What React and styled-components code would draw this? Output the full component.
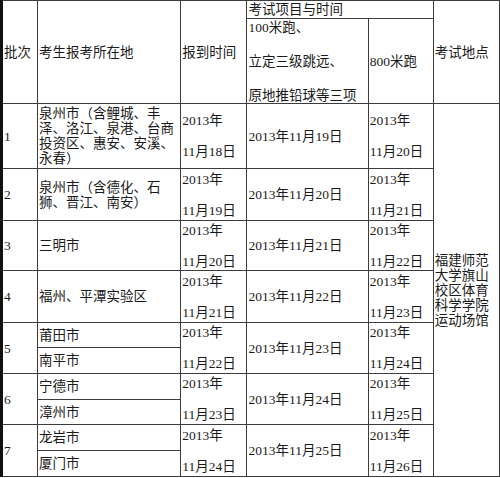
import React from "react";
import styled, { createGlobalStyle } from "styled-components";

const GlobalStyle = createGlobalStyle`
  body {
    margin: 0;
    background: #fff;
  }
`;

const Table = styled.table`
  border-collapse: collapse;
  table-layout: fixed;
  width: 500px;
  font-family: "Liberation Serif", "Noto Sans CJK SC", serif;
  font-size: 13.5px;
  color: #1a1a1a;
  border-left: 3px solid #111;
`;

const Row = styled.tr`
  height: ${(p) => p.$h}px;
`;

const Cell = styled.td`
  border: 1px solid #3c3c3c;
  padding: 0 1px;
  vertical-align: middle;
  text-align: left;
  line-height: ${(p) => p.$lh || 15}px;
  white-space: nowrap;
  overflow: hidden;
`;

const Stack = styled.div`
  display: flex;
  flex-direction: column;
  gap: ${(p) => p.$gap}px;
`;

const Place = styled.div`
  white-space: normal;
  word-break: break-all;
`;

const DateStack = ({ day }) => (
  <Stack $gap={16}>
    <span>2013年</span>
    <span>{day}</span>
  </Stack>
);

const rows = [
  {
    no: "1",
    places: [["泉州市（含鲤城、丰", "泽、洛江、泉港、台商", "投资区、惠安、安溪、", "永春）"]],
    report: "11月18日",
    test: "2013年11月19日",
    run: "11月20日",
    h: [65],
  },
  {
    no: "2",
    places: [["泉州市（含德化、石", "狮、晋江、南安）"]],
    report: "11月19日",
    test: "2013年11月20日",
    run: "11月21日",
    h: [52],
  },
  {
    no: "3",
    places: [["三明市"]],
    report: "11月20日",
    test: "2013年11月21日",
    run: "11月22日",
    h: [50],
  },
  {
    no: "4",
    places: [["福州、平潭实验区"]],
    report: "11月21日",
    test: "2013年11月22日",
    run: "11月23日",
    h: [52],
  },
  {
    no: "5",
    places: [["莆田市"], ["南平市"]],
    report: "11月22日",
    test: "2013年11月23日",
    run: "11月24日",
    h: [25, 26],
  },
  {
    no: "6",
    places: [["宁德市"], ["漳州市"]],
    report: "11月23日",
    test: "2013年11月24日",
    run: "11月25日",
    h: [26, 25],
  },
  {
    no: "7",
    places: [["龙岩市"], ["厦门市"]],
    report: "11月24日",
    test: "2013年11月25日",
    run: "11月26日",
    h: [26, 26],
  },
];

const bodySpan = rows.reduce((n, r) => n + r.places.length, 0);

const App = () => {
  const body = [];
  rows.forEach((r, ri) => {
    const span = r.places.length;
    r.places.forEach((lines, pi) => (
      body.push(
        <Row key={`${ri}-${pi}`} $h={r.h[pi]}>
          {pi === 0 && <Cell rowSpan={span}>{r.no}</Cell>}
          <Cell>
            <Place>
              {lines.map((l) => (
                <div key={l}>{l}</div>
              ))}
            </Place>
          </Cell>
          {pi === 0 && (
            <>
              <Cell rowSpan={span}>
                <DateStack day={r.report} />
              </Cell>
              <Cell rowSpan={span}>{r.test}</Cell>
              <Cell rowSpan={span}>
                <DateStack day={r.run} />
              </Cell>
            </>
          )}
          {ri === 0 && pi === 0 && (
            <Cell rowSpan={bodySpan}>
              <Stack $gap={0}>
                <span>福建师范</span>
                <span>大学旗山</span>
                <span>校区体育</span>
                <span>科学学院</span>
                <span>运动场馆</span>
              </Stack>
            </Cell>
          )}
        </Row>
      )
    ));
  });

  return (
    <>
      <GlobalStyle />
      <Table>
        <colgroup>
          <col style={{ width: 36 }} />
          <col style={{ width: 143 }} />
          <col style={{ width: 66 }} />
          <col style={{ width: 121 }} />
          <col style={{ width: 65 }} />
          <col style={{ width: 66 }} />
        </colgroup>
        <tbody>
          <Row $h={18}>
            <Cell rowSpan={2}>批次</Cell>
            <Cell rowSpan={2}>考生报考所在地</Cell>
            <Cell rowSpan={2}>报到时间</Cell>
            <Cell colSpan={2}>考试项目与时间</Cell>
            <Cell rowSpan={2}>考试地点</Cell>
          </Row>
          <Row $h={85}>
            <Cell>
              <Stack $gap={19}>
                <span>100米跑、</span>
                <span>立定三级跳远、</span>
                <span>原地推铅球等三项</span>
              </Stack>
            </Cell>
            <Cell>800米跑</Cell>
          </Row>
          {body}
        </tbody>
      </Table>
    </>
  );
};

export default App;
